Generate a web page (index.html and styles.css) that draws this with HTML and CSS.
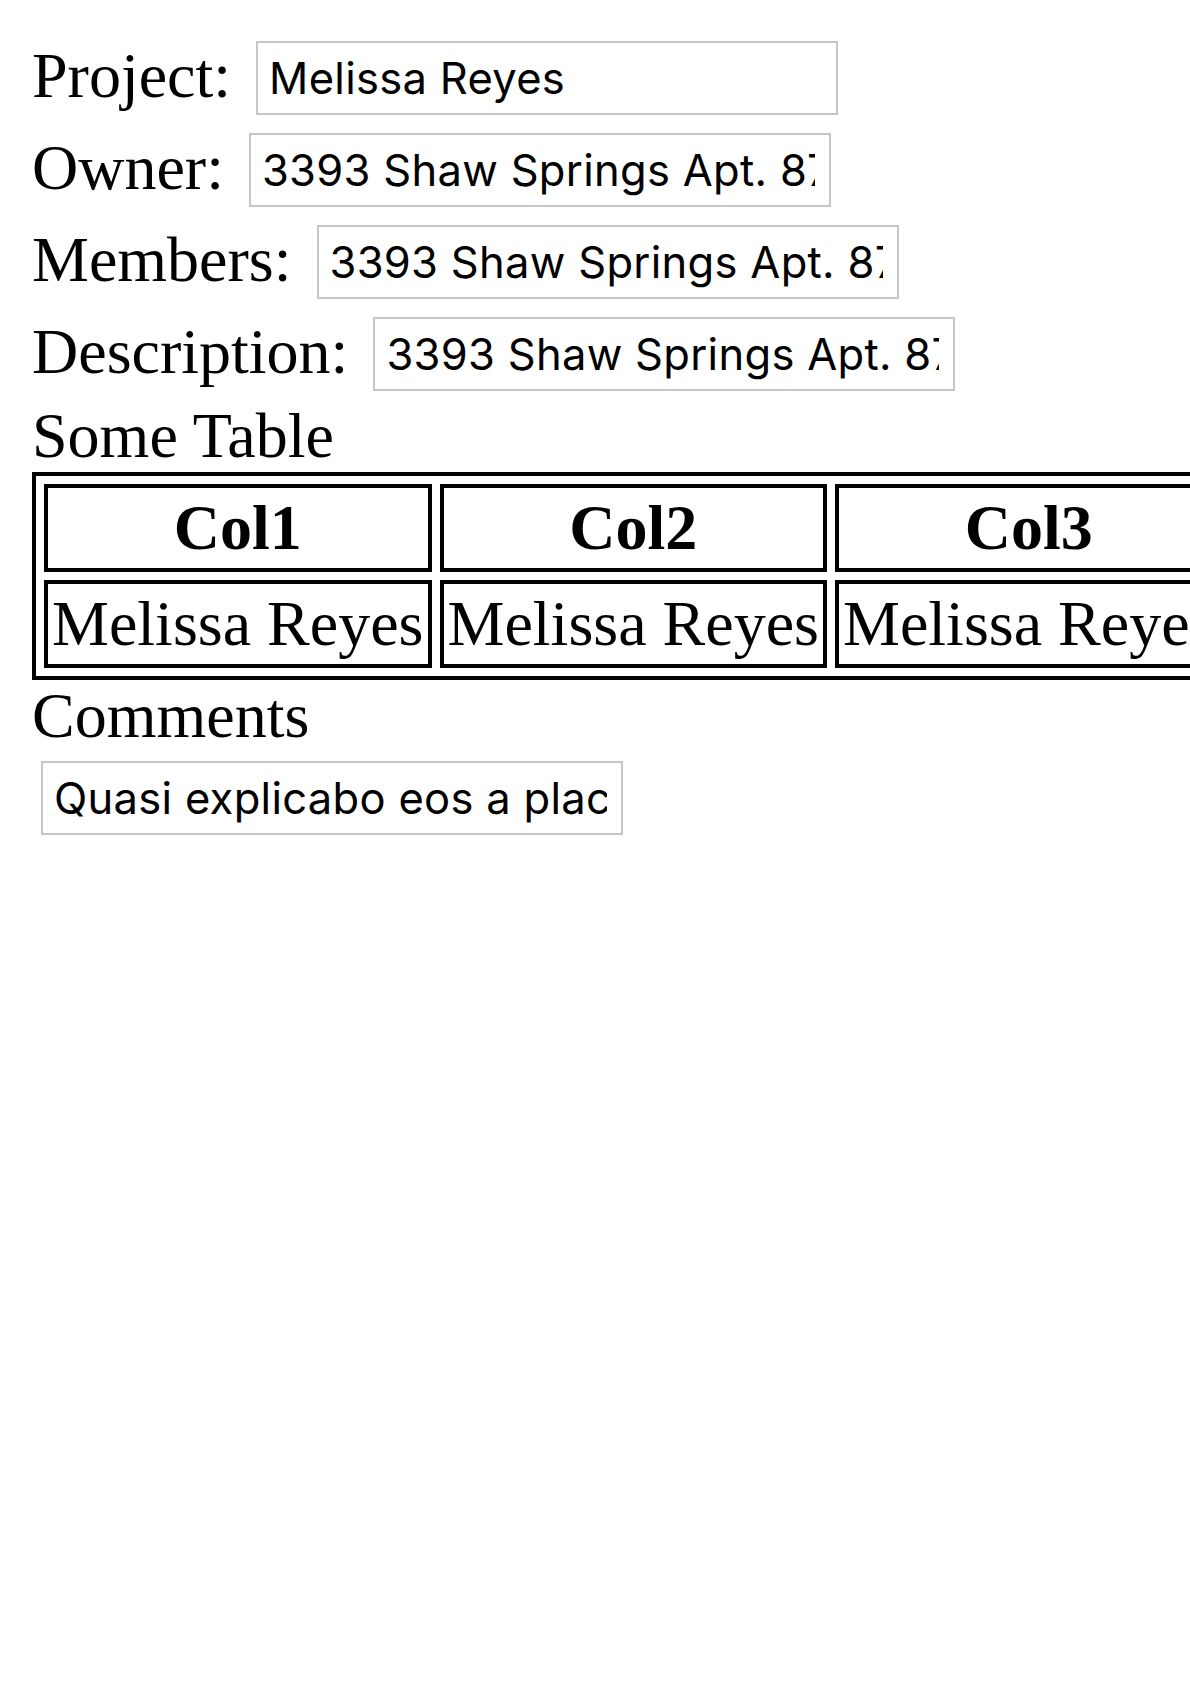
FILE: index.html
```html
<!DOCTYPE html>
<html lang="en">
<head>
<meta charset="utf-8">
<title>Project</title>
<link rel="stylesheet" href="styles.css">
</head>
<body>
<div class="page">
  <div class="field">
    <label class="label" for="project">Project:</label>
    <input class="input" id="project" type="text" value="Melissa Reyes">
  </div>
  <div class="field">
    <label class="label" for="owner">Owner:</label>
    <input class="input" id="owner" type="text" value="3393 Shaw Springs Apt. 871">
  </div>
  <div class="field">
    <label class="label" for="members">Members:</label>
    <input class="input" id="members" type="text" value="3393 Shaw Springs Apt. 871">
  </div>
  <div class="field">
    <label class="label" for="description">Description:</label>
    <input class="input" id="description" type="text" value="3393 Shaw Springs Apt. 871">
  </div>
  <div class="heading">Some Table</div>
  <table class="grid">
    <thead>
      <tr><th>Col1</th><th>Col2</th><th>Col3</th></tr>
    </thead>
    <tbody>
      <tr><td>Melissa Reyes</td><td>Melissa Reyes</td><td>Melissa Reyes</td></tr>
    </tbody>
  </table>
  <div class="heading">Comments</div>
  <input class="input comments" type="text" value="Quasi explicabo eos a placeat voluptas">
</div>
</body>
</html>
```

FILE: styles.css
```css
html, body {
  margin: 0;
  padding: 0;
  background: #ffffff;
}

.page {
  padding: 32px 0 0 32px;
  overflow: hidden;
  font-family: "Liberation Serif", "Times New Roman", serif;
  font-size: 64px;
  color: #000000;
}

.field {
  display: flex;
  align-items: center;
  gap: 16px;
}

.label {
  line-height: 72px;
  padding-bottom: 5px;
}

.input {
  box-sizing: border-box;
  width: 582px;
  height: 74px;
  margin: 9px;
  padding: 0 14px 0 11px;
  border: 2px solid #c6c6c6;
  border-radius: 0;
  outline: none;
  background: #ffffff;
  font-family: Inter, "Liberation Sans", Arial, sans-serif;
  font-size: 43.5px;
  letter-spacing: 0.3px;
  color: #000000;
}

.heading {
  line-height: 72px;
}

.grid {
  border: 4px solid #000000;
  border-spacing: 8px;
  border-collapse: separate;
}

.grid th,
.grid td {
  border: 4px solid #000000;
  padding: 4px;
  line-height: 72px;
  white-space: nowrap;
}

.grid th {
  font-weight: bold;
  text-align: center;
}

.grid td {
  text-align: left;
}

.comments {
  display: block;
}
```
